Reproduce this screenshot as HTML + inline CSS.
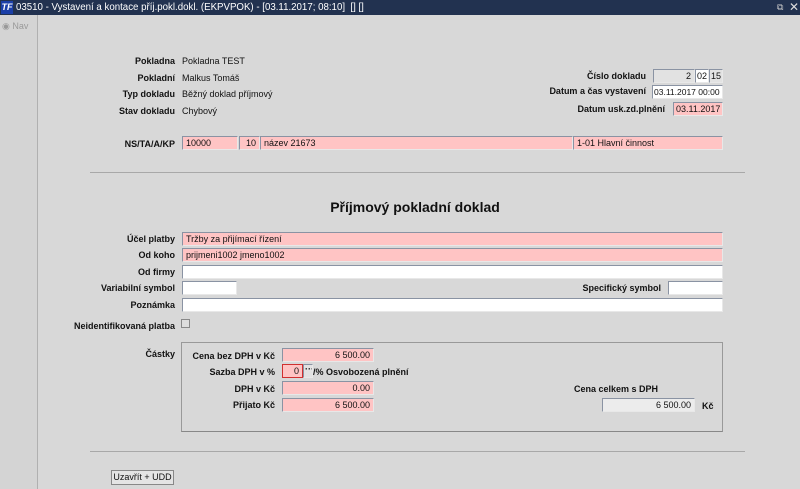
<!DOCTYPE html>
<html><head><meta charset="utf-8"><style>
*{box-sizing:border-box;margin:0;padding:0}
body{width:800px;height:489px;background:#d8d8d8;font-family:"Liberation Sans",sans-serif;font-size:9px;color:#111;position:relative;overflow:hidden}
.a{position:absolute;white-space:nowrap}
.l{position:absolute;font-weight:bold;text-align:right;white-space:nowrap;font-size:9px}
.f{position:absolute;height:14px;border:1px solid #8a93a3;border-bottom-color:#e8e8e8;border-right-color:#e8e8e8;background:#fff;padding:1px 3px;line-height:11px;font-size:9px;white-space:nowrap;overflow:hidden}
.p{background:#ffc4c4}
.g{background:#e2e2e2}
.r{text-align:right}
</style></head><body>
<div class="a" style="left:0;top:0;width:800px;height:15px;background:#223250;color:#fff;font-size:9.7px;line-height:15px;padding-left:16px">03510 - Vystavení a kontace příj.pokl.dokl. (EKPVPOK) - [03.11.2017; 08:10] &nbsp;[] []</div>
<div class="a" style="left:1px;top:1px;width:12px;height:13px;background:#1b3fa8;color:#fff;font-style:italic;font-weight:bold;font-size:9px;line-height:13px;text-align:center">TF</div>
<div class="a" style="left:777px;top:2px;color:#ccc;font-size:9px">⧉</div>
<div class="a" style="left:789px;top:0;color:#ddd;font-size:12px;line-height:15px">✕</div>
<div class="a" style="left:0;top:15px;width:38px;height:474px;background:#d4d4d4;border-right:1px solid #b0b0b0"></div>
<div class="a" style="left:2px;top:21px;color:#999;font-size:9px">◉ Nav</div>

<div class="l" style="right:625px;top:56px">Pokladna</div><div class="a" style="left:182px;top:56px">Pokladna TEST</div>
<div class="l" style="right:625px;top:73px">Pokladní</div><div class="a" style="left:182px;top:73px">Malkus Tomáš</div>
<div class="l" style="right:625px;top:89px">Typ dokladu</div><div class="a" style="left:182px;top:89px">Běžný doklad příjmový</div>
<div class="l" style="right:625px;top:106px">Stav dokladu</div><div class="a" style="left:182px;top:106px">Chybový</div>

<div class="l" style="right:154px;top:71px">Číslo dokladu</div>
<div class="f g r" style="left:653px;top:69px;width:42px">2</div>
<div class="f" style="left:695px;top:69px;width:14px;padding:1px 1px">02</div>
<div class="f g" style="left:709px;top:69px;width:14px;padding:1px 1px">15</div>
<div class="l" style="right:154px;top:86px">Datum a čas vystavení</div>
<div class="f" style="left:652px;top:85px;width:71px;padding:1px 1px;font-size:8.5px">03.11.2017 00:00</div>
<div class="l" style="right:135px;top:104px">Datum usk.zd.plnění</div>
<div class="f p" style="left:673px;top:102px;width:50px;padding:1px 2px">03.11.2017</div>

<div class="l" style="right:625px;top:139px">NS/TA/A/KP</div>
<div class="f p" style="left:182px;top:136px;width:56px">10000</div>
<div class="f p r" style="left:239px;top:136px;width:21px">10</div>
<div class="f p" style="left:260px;top:136px;width:313px">název 21673</div>
<div class="f p" style="left:573px;top:136px;width:150px">1-01 Hlavní činnost</div>

<div class="a" style="left:90px;top:172px;width:655px;height:1px;background:#a8a8a8"></div>
<div class="a" style="left:0;width:830px;top:199px;text-align:center;font-weight:bold;font-size:14px">Příjmový pokladní doklad</div>

<div class="l" style="right:625px;top:234px">Účel platby</div><div class="f p" style="left:182px;top:232px;width:541px">Tržby za přijímací řízení</div>
<div class="l" style="right:625px;top:250px">Od koho</div><div class="f p" style="left:182px;top:248px;width:541px">prijmeni1002 jmeno1002</div>
<div class="l" style="right:625px;top:267px">Od firmy</div><div class="f" style="left:182px;top:265px;width:541px"></div>
<div class="l" style="right:625px;top:283px">Variabilní symbol</div><div class="f" style="left:182px;top:281px;width:55px"></div>
<div class="l" style="right:139px;top:283px">Specifický symbol</div><div class="f" style="left:668px;top:281px;width:55px"></div>
<div class="l" style="right:625px;top:300px">Poznámka</div><div class="f" style="left:182px;top:298px;width:541px"></div>
<div class="l" style="right:625px;top:321px">Neidentifikovaná platba</div>
<div class="a" style="left:181px;top:319px;width:9px;height:9px;border:1px solid #888;background:#ddd"></div>

<div class="l" style="right:625px;top:349px">Částky</div>
<div class="a" style="left:181px;top:342px;width:542px;height:90px;border:1px solid #999;border-bottom-color:#888"></div>
<div class="l" style="right:525px;top:351px">Cena bez DPH v Kč</div><div class="f p r" style="left:282px;top:348px;width:92px">6 500.00</div>
<div class="l" style="right:525px;top:367px">Sazba DPH v %</div>
<div class="f p r" style="left:282px;top:364px;width:21px;border:1px solid #d03030">0</div>
<div class="f g" style="left:303px;top:364px;width:10px;padding:0 1px;font-weight:bold;line-height:9px">···</div>
<div class="a" style="left:313px;top:367px;font-weight:bold">/% Osvobozená plnění</div>
<div class="l" style="right:525px;top:384px">DPH v Kč</div><div class="f p r" style="left:282px;top:381px;width:92px">0.00</div>
<div class="l" style="right:525px;top:400px">Přijato Kč</div><div class="f p r" style="left:282px;top:398px;width:92px">6 500.00</div>
<div class="a" style="left:574px;top:384px;font-weight:bold">Cena celkem s DPH</div>
<div class="f g r" style="left:602px;top:398px;width:93px;background:#ececec">6 500.00</div>
<div class="a" style="left:702px;top:401px;font-weight:bold">Kč</div>

<div class="a" style="left:90px;top:451px;width:655px;height:1px;background:#a8a8a8"></div>
<div class="a" style="left:111px;top:470px;width:63px;height:15px;border:1px solid #888;background:#e4e4e4;text-align:center;line-height:13px;font-size:9px">Uzavřít + UDD</div>
</body></html>
